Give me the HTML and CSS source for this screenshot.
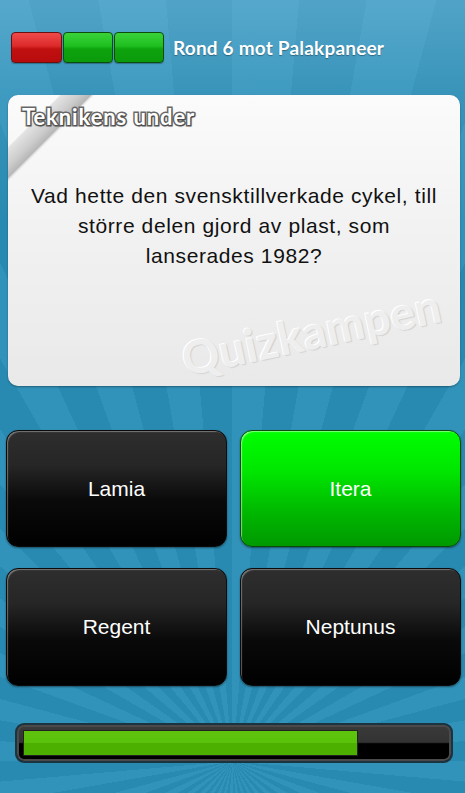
FILE: index.html
```html
<!DOCTYPE html>
<html lang="sv">
<head>
<meta charset="utf-8">
<title>Quizkampen</title>
<link rel="stylesheet" href="styles.css">
</head>
<body>
<div class="screen">
  <header class="topbar">
    <div class="scores">
      <span class="score red"></span>
      <span class="score green"></span>
      <span class="score green"></span>
    </div>
    <div class="round">Rond 6 mot Palakpaneer</div>
  </header>

  <section class="card">
    <div class="ribbon"></div>
    <div class="category">Teknikens under</div>
    <p class="question">Vad hette den svensktillverkade cykel, till större delen gjord av plast, som lanserades 1982?</p>
    <div class="watermark">Quizkampen</div>
  </section>

  <section class="answers">
    <div class="answer">Lamia</div>
    <div class="answer correct">Itera</div>
    <div class="answer">Regent</div>
    <div class="answer">Neptunus</div>
  </section>

  <div class="progress">
    <div class="progress-fill" style="width:79.4%"></div>
  </div>
</div>
</body>
</html>
```

FILE: styles.css
```css
html, body {
  margin: 0;
  padding: 0;
}

body {
  width: 465px;
  height: 793px;
  overflow: hidden;
  font-family: "Liberation Sans", Arial, sans-serif;
  background-color: #2a8fb7;
  background-image:
    linear-gradient(180deg, rgba(130, 195, 225, 0.45) 0px, rgba(100, 175, 212, 0.28) 90px, rgba(0, 0, 0, 0) 220px),
    repeating-conic-gradient(from 0deg at 50% 96%, rgba(255, 255, 255, 0.035) 0deg 5deg, rgba(0, 0, 0, 0.035) 5deg 10deg);
}

.screen {
  display: flex;
  flex-direction: column;
}

/* header */
.topbar {
  display: flex;
  align-items: center;
  padding: 32px 0 0 11px;
  height: 31px;
}

.scores {
  display: flex;
  gap: 1px;
}

.score {
  display: block;
  width: 48px;
  height: 29px;
  border-radius: 4px;
  border: 1px solid rgba(0, 40, 0, 0.6);
  box-shadow: 0 1px 1px rgba(0, 0, 0, 0.3);
}

.score.red {
  width: 49px;
  background: linear-gradient(180deg, #ef4a4a 0%, #dc2a2a 45%, #c01010 55%, #b80c0c 100%);
  border-color: #6a1010;
}

.score.green {
  background: linear-gradient(180deg, #3ad33a 0%, #1fbf1f 45%, #0ea40e 55%, #0b9a0b 100%);
  border-color: #0c4d0c;
}

.round {
  margin-left: 9px;
  color: #fff;
  font-family: "Lato", "Open Sans", sans-serif;
  font-weight: 700;
  font-size: 19px;
  letter-spacing: 0.2px;
  text-shadow: 0 1px 1px rgba(0, 0, 0, 0.35);
}

/* question card */
.card {
  position: relative;
  overflow: hidden;
  margin: 32px 5px 0 8px;
  height: 291px;
  border-radius: 10px;
  background: linear-gradient(180deg, #fbfbfb 0%, #f1f1f1 50%, #e9e9e9 100%);
  box-shadow: 0 1px 2px rgba(0, 0, 0, 0.35);
  display: flex;
  flex-direction: column;
  align-items: center;
}

.ribbon {
  position: absolute;
  left: -42px;
  top: 14px;
  width: 170px;
  height: 22px;
  transform: rotate(-45deg);
  background: linear-gradient(180deg, #e4e4e4 0%, #cdcdcd 60%, #b5b5b5 100%);
  box-shadow: 0 1px 2px rgba(0, 0, 0, 0.15);
}

.category {
  position: absolute;
  left: 14px;
  top: 8px;
  color: #fff;
  font-family: "Lato", "Open Sans", sans-serif;
  font-weight: 700;
  font-size: 22px;
  letter-spacing: 0.9px;
  -webkit-text-stroke: 3px #6a6a6a;
  paint-order: stroke fill;
  text-shadow: 1px 1px 2px rgba(0, 0, 0, 0.4);
}

.question {
  margin: 86px 0 0 0;
  padding: 0 14px;
  text-align: center;
  font-size: 21px;
  letter-spacing: 0.6px;
  line-height: 30px;
  color: #111;
}

.watermark {
  position: absolute;
  left: 180px;
  bottom: 0;
  font-family: "Lato", "Open Sans", sans-serif;
  font-weight: 700;
  font-size: 46px;
  letter-spacing: 0.5px;
  line-height: 54px;
  color: #eeeeee;
  transform: rotate(-12deg);
  transform-origin: left bottom;
  text-shadow: -1px -1px 0 #ffffff, 1px 1px 1px #d0d0d0;
}

/* answers */
.answers {
  display: grid;
  grid-template-columns: 221px 221px;
  grid-template-rows: 117px 118px;
  column-gap: 13px;
  row-gap: 21px;
  margin: 44px 0 0 6px;
}

.answer {
  display: flex;
  align-items: center;
  justify-content: center;
  border-radius: 12px;
  border: 1px solid #0b0b0b;
  box-sizing: border-box;
  color: #fff;
  font-size: 21px;
  background: linear-gradient(180deg, #2e2e2e 0%, #262626 30%, #0a0a0a 60%, #000 100%);
  box-shadow: inset 2px 2px 1px -1px rgba(255, 255, 255, 0.35), 0 1px 2px rgba(0, 0, 0, 0.45);
}

.answer.correct {
  border-color: #0a4a0a;
  background: linear-gradient(180deg, #00ff00 0%, #00e600 35%, #00b800 70%, #009900 100%);
  box-shadow: inset 2px 2px 1px -1px rgba(255, 255, 255, 0.5), 0 1px 2px rgba(0, 0, 0, 0.45);
}

/* timer */
.progress {
  margin: 37px 12px 0 15px;
  height: 40px;
  box-sizing: border-box;
  padding: 5px 6px 5px 6px;
  border-radius: 9px;
  border: 2px solid #1b3440;
  background: linear-gradient(180deg, #3a3a3a 0%, #333 48%, #000 52%, #000 100%);
  box-shadow: inset 0 0 0 2px #4a4a4a;
}

.progress-fill {
  height: 100%;
  border: 1px solid #222;
  box-sizing: border-box;
  background: linear-gradient(180deg, #5fc30d 0%, #5ac20a 48%, #4cb000 52%, #4cb000 100%);
}
```
